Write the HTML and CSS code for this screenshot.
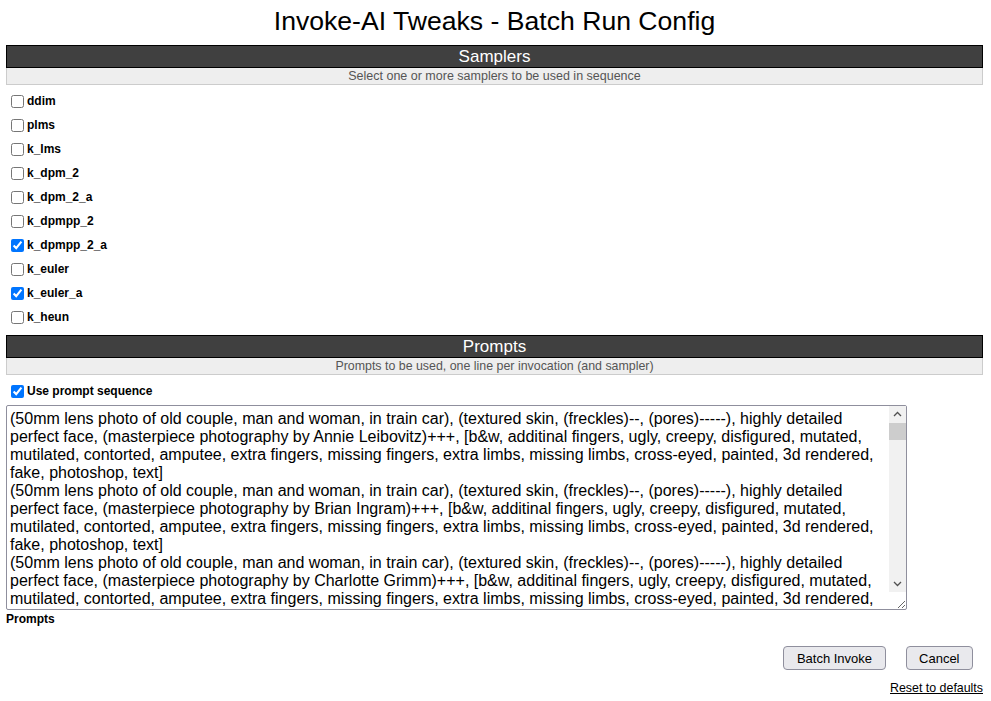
FILE: index.html
```html
<!DOCTYPE html>
<html>
<head>
<meta charset="utf-8">
<title>Invoke-AI Tweaks - Batch Run Config</title>
<link rel="stylesheet" href="styles.css">
</head>
<body>
<div class="page">
  <h1 class="title">Invoke-AI Tweaks - Batch Run Config</h1>

  <section class="panel">
    <div class="panel-head">Samplers</div>
    <div class="panel-sub sub-samplers">Select one or more samplers to be used in sequence</div>
    <ul class="checks">
      <li><label><input type="checkbox"> ddim</label></li>
      <li><label><input type="checkbox"> plms</label></li>
      <li><label><input type="checkbox"> k_lms</label></li>
      <li><label><input type="checkbox"> k_dpm_2</label></li>
      <li><label><input type="checkbox"> k_dpm_2_a</label></li>
      <li><label><input type="checkbox"> k_dpmpp_2</label></li>
      <li><label><input type="checkbox" checked> k_dpmpp_2_a</label></li>
      <li><label><input type="checkbox"> k_euler</label></li>
      <li><label><input type="checkbox" checked> k_euler_a</label></li>
      <li><label><input type="checkbox"> k_heun</label></li>
    </ul>
  </section>

  <section class="panel">
    <div class="panel-head">Prompts</div>
    <div class="panel-sub sub-prompts">Prompts to be used, one line per invocation (and sampler)</div>
    <div class="seq"><label><input type="checkbox" checked> Use prompt sequence</label></div>
    <div class="ta-wrap">
    <textarea class="prompts">(50mm lens photo of old couple, man and woman, in train car), (textured skin, (freckles)--, (pores)-----), highly detailed perfect face, (masterpiece photography by Annie Leibovitz)+++, [b&amp;w, additinal fingers, ugly, creepy, disfigured, mutated, mutilated, contorted, amputee, extra fingers, missing fingers, extra limbs, missing limbs, cross-eyed, painted, 3d rendered, fake, photoshop, text]
(50mm lens photo of old couple, man and woman, in train car), (textured skin, (freckles)--, (pores)-----), highly detailed perfect face, (masterpiece photography by Brian Ingram)+++, [b&amp;w, additinal fingers, ugly, creepy, disfigured, mutated, mutilated, contorted, amputee, extra fingers, missing fingers, extra limbs, missing limbs, cross-eyed, painted, 3d rendered, fake, photoshop, text]
(50mm lens photo of old couple, man and woman, in train car), (textured skin, (freckles)--, (pores)-----), highly detailed perfect face, (masterpiece photography by Charlotte Grimm)+++, [b&amp;w, additinal fingers, ugly, creepy, disfigured, mutated, mutilated, contorted, amputee, extra fingers, missing fingers, extra limbs, missing limbs, cross-eyed, painted, 3d rendered, fake, photoshop, text]
(50mm lens photo of old couple, man and woman, in train car), (textured skin, (freckles)--, (pores)-----), highly detailed perfect face, (masterpiece photography by Dorothea Lange)+++, [b&amp;w, additinal fingers, ugly, creepy, disfigured, mutated, mutilated, contorted, amputee, extra fingers, missing fingers, extra limbs, missing limbs, cross-eyed, painted, 3d rendered, fake, photoshop, text]
(50mm lens photo of old couple, man and woman, in train car), (textured skin, (freckles)--, (pores)-----), highly detailed perfect face, (masterpiece photography by Elliott Erwitt)+++, [b&amp;w, additinal fingers, ugly, creepy, disfigured, mutated, mutilated, contorted, amputee, extra fingers, missing fingers, extra limbs, missing limbs, cross-eyed, painted, 3d rendered, fake, photoshop, text]
(50mm lens photo of old couple, man and woman, in train car), (textured skin, (freckles)--, (pores)-----), highly detailed perfect face, (masterpiece photography by Fan Ho)+++, [b&amp;w, additinal fingers, ugly, creepy, disfigured, mutated, mutilated, contorted, amputee, extra fingers, missing fingers, extra limbs, missing limbs, cross-eyed, painted, 3d rendered, fake, photoshop, text]
(50mm lens photo of old couple, man and woman, in train car), (textured skin, (freckles)--, (pores)-----), highly detailed perfect face, (masterpiece photography by Gordon Parks)+++, [b&amp;w, additinal fingers, ugly, creepy, disfigured, mutated, mutilated, contorted, amputee, extra fingers, missing fingers, extra limbs, missing limbs, cross-eyed, painted, 3d rendered, fake, photoshop, text]
(50mm lens photo of old couple, man and woman, in train car), (textured skin, (freckles)--, (pores)-----), highly detailed perfect face, (masterpiece photography by Helmut Newton)+++, [b&amp;w, additinal fingers, ugly, creepy, disfigured, mutated, mutilated, contorted, amputee, extra fingers, missing fingers, extra limbs, missing limbs, cross-eyed, painted, 3d rendered, fake, photoshop, text]
(50mm lens photo of old couple, man and woman, in train car), (textured skin, (freckles)--, (pores)-----), highly detailed perfect face, (masterpiece photography by Irving Penn)+++, [b&amp;w, additinal fingers, ugly, creepy, disfigured, mutated, mutilated, contorted, amputee, extra fingers, missing fingers, extra limbs, missing limbs, cross-eyed, painted, 3d rendered, fake, photoshop, text]
(50mm lens photo of old couple, man and woman, in train car), (textured skin, (freckles)--, (pores)-----), highly detailed perfect face, (masterpiece photography by Jill Greenberg)+++, [b&amp;w, additinal fingers, ugly, creepy, disfigured, mutated, mutilated, contorted, amputee, extra fingers, missing fingers, extra limbs, missing limbs, cross-eyed, painted, 3d rendered, fake, photoshop, text]</textarea>
    <div class="fake-scroll" aria-hidden="true">
      <div class="sb-btn">
        <svg width="9" height="9" viewBox="0 0 9 9"><path d="M1 6 L4.5 2.5 L8 6" fill="none" stroke="#505050" stroke-width="1.3"/></svg>
      </div>
      <div class="sb-track"><div class="sb-thumb"></div></div>
      <div class="sb-btn">
        <svg width="9" height="9" viewBox="0 0 9 9"><path d="M1 3 L4.5 6.5 L8 3" fill="none" stroke="#505050" stroke-width="1.3"/></svg>
      </div>
    </div>
    </div>
    <div class="field-label">Prompts</div>
  </section>

  <div class="actions">
    <button class="btn" type="button">Batch Invoke</button>
    <button class="btn" type="button">Cancel</button>
  </div>
  <div class="reset"><a href="#">Reset to defaults</a></div>
</div>
</body>
</html>
```

FILE: styles.css
```css
html, body {
  margin: 0;
  padding: 0;
  background: #ffffff;
}
body {
  font-family: "Liberation Sans", Arial, sans-serif;
  color: #000;
}
.page {
  padding: 0 8px 0 6px;
}
.title {
  margin: 0;
  padding-top: 5px;
  height: 45px;
  box-sizing: border-box;
  font-size: 26.6px;
  font-weight: normal;
  line-height: 32px;
  text-align: center;
}
.panel-head {
  background: #404040;
  color: #fff;
  border: 1px solid #000;
  font-size: 17px;
  line-height: 21px;
  text-align: center;
}
.panel-sub {
  background: #eeeeee;
  color: #555;
  border: 1px solid #cccccc;
  border-top: none;
  font-size: 12.5px;
  line-height: 16px;
  text-align: center;
}
.sub-prompts {
  font-size: 12.4px;
}
.checks {
  list-style: none;
  margin: 0;
  padding: 4px 0 6px 0;
}
.checks li {
  height: 24px;
  display: flex;
  align-items: center;
}
label {
  display: flex;
  align-items: center;
  font-size: 12px;
  font-weight: bold;
  gap: 1px;
}
input[type="checkbox"] {
  width: 13px;
  height: 13px;
  margin: 0 2px 0 5px;
}
.seq {
  height: 24px;
  display: flex;
  align-items: center;
  margin-top: 4px;
  margin-bottom: 2px;
}
.ta-wrap {
  position: relative;
  width: 901px;
  height: 205px;
}
.prompts {
  display: block;
  width: 901px;
  height: 205px;
  box-sizing: border-box;
  margin: 0;
  padding: 4px 20px 2px 3px;
  border: 1px solid #8f8f9d;
  border-radius: 2px;
  font-family: "Liberation Sans", Arial, sans-serif;
  font-size: 16px;
  line-height: 18px;
  color: #000;
  resize: both;
  overflow-y: hidden;
}
.fake-scroll {
  position: absolute;
  top: 1px;
  right: 1px;
  width: 17px;
  height: 186px;
  background: #f1f1f1;
  display: flex;
  flex-direction: column;
}
.sb-btn {
  height: 17px;
  display: flex;
  align-items: center;
  justify-content: center;
}
.sb-btn svg {
  display: block;
}
.sb-track {
  flex: 1;
}
.sb-thumb {
  height: 17px;
  background: #cdcdcd;
}
.field-label {
  font-size: 12px;
  font-weight: bold;
  line-height: 16px;
  margin-top: 1px;
}
.actions {
  display: flex;
  justify-content: flex-end;
  gap: 20px;
  padding-right: 10px;
  margin-top: 19px;
}
.btn {
  font-family: "Liberation Sans", Arial, sans-serif;
  font-size: 13px;
  height: 24px;
  padding: 0 12.5px;
  background: #e9e9ed;
  border: 1px solid #8f8f9d;
  border-radius: 4px;
  color: #000;
}
.reset {
  text-align: right;
  margin-top: 11px;
  font-size: 12.4px;
  line-height: 14px;
}
.reset a {
  color: #000;
}
```
